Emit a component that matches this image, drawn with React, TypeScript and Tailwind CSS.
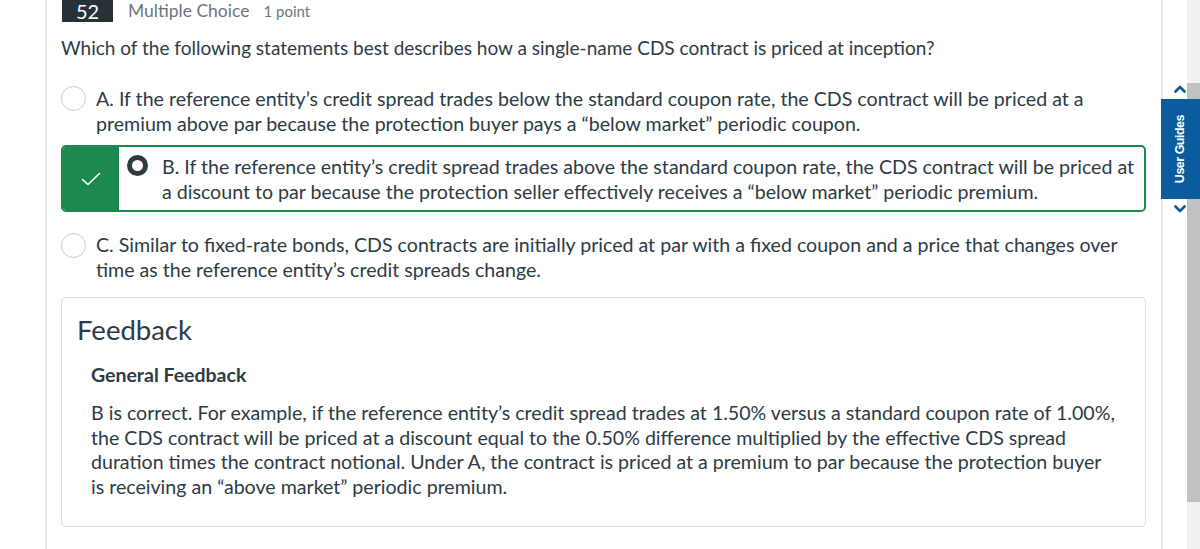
import React from "react";

function Radio() {
  return (
    <span className="block w-[25px] h-[25px] shrink-0 rounded-full border border-[#c7cdd1] bg-white" />
  );
}

export default function App() {
  return (
    <div className="relative w-[1200px] h-[549px] overflow-hidden bg-white flex font-['Lato','Noto_Sans',sans-serif] text-[#2d3b45]">
      <div className="w-[45px] shrink-0" />
      <div className="w-[2px] shrink-0 bg-[#e8e8e8]" />
      <main className="w-[1114px] shrink-0 pl-[14px] pr-[15px]">
        {/* header */}
        <div className="flex items-center h-[22px]">
          <div className="w-[51px] h-[22px] ml-[1px] bg-[#263238] text-white text-[20px] leading-[22px] text-center">
            52
          </div>
          <span className="ml-[15px] text-[17.5px] leading-[22px] text-[#6b7780]">Multiple Choice</span>
          <span className="ml-[14px] text-[15px] leading-[22px] text-[#6b7780]">1 point</span>
        </div>

        {/* question */}
        <p className="mt-[14px] text-[19px] leading-[24px]">
          Which of the following statements best describes how a single-name CDS contract is priced at inception?
        </p>

        {/* option A */}
        <div className="mt-[27px] flex items-start">
          <div className="-mt-[1px]">
            <Radio />
          </div>
          <p className="ml-[10px] text-[19.6px] leading-[24.5px] whitespace-nowrap">
            A. If the reference entity’s credit spread trades below the standard coupon rate, the CDS contract will be priced at a
            <br />
            premium above par because the protection buyer pays a “below market” periodic coupon.
          </p>
        </div>

        {/* option B */}
        <div className="mt-[9px] flex h-[67px] border-2 border-[#1c8a4e] rounded-[5px] overflow-hidden">
          <div className="w-[56px] shrink-0 bg-[#1c8a4e] flex items-center justify-center">
            <svg width="20" height="14" viewBox="0 0 20 14" fill="none">
              <path d="M1.5 7.5 L7 12.5 L18.5 1.5" stroke="white" strokeWidth="1.6" strokeLinecap="round" strokeLinejoin="round" />
            </svg>
          </div>
          <div className="flex items-start pl-[8px] pt-[8px]">
            <span className="block w-[21px] h-[21px] shrink-0 rounded-full border-[5px] border-[#2d3b45] bg-white" />
            <p className="ml-[14px] text-[19.6px] leading-[24.5px] whitespace-nowrap">
              B. If the reference entity’s credit spread trades above the standard coupon rate, the CDS contract will be priced at
              <br />
              a discount to par because the protection seller effectively receives a “below market” periodic premium.
            </p>
          </div>
        </div>

        {/* option C */}
        <div className="mt-[21px] flex items-start">
          <Radio />
          <p className="ml-[10px] text-[19.6px] leading-[24.5px] whitespace-nowrap">
            C. Similar to fixed-rate bonds, CDS contracts are initially priced at par with a fixed coupon and a price that changes over
            <br />
            time as the reference entity’s credit spreads change.
          </p>
        </div>

        {/* feedback */}
        <div className="mt-[15px] h-[230px] border border-[#dcdcdc] rounded-[5px] pl-[15px] pt-[16px]">
          <h2 className="text-[27.5px] leading-[32px] font-normal">Feedback</h2>
          <div className="pl-[14px]">
            <h3 className="mt-[16px] text-[19.5px] leading-[26px] font-bold">General Feedback</h3>
            <p className="mt-[13px] text-[19.6px] leading-[24.5px] whitespace-nowrap">
              B is correct. For example, if the reference entity’s credit spread trades at 1.50% versus a standard coupon rate of 1.00%,
              <br />
              the CDS contract will be priced at a discount equal to the 0.50% difference multiplied by the effective CDS spread
              <br />
              duration times the contract notional. Under A, the contract is priced at a premium to par because the protection buyer
              <br />
              is receiving an “above market” periodic premium.
            </p>
          </div>
        </div>
      </main>
      <div className="w-[2px] shrink-0 bg-[#e8e8e8]" />
      <div className="w-[24px] shrink-0" />
      <div className="w-[13px] shrink-0 bg-[#f1f1f1]">
        <div className="mt-[83px] h-[419px] bg-[#c1c1c1]" />
      </div>

      {/* User Guides tab */}
      <div className="absolute left-[1174px] top-[85px]">
        <svg width="12" height="8" viewBox="0 0 12 8" fill="none">
          <path d="M1.5 6.5 L6 2 L10.5 6.5" stroke="#0b5a9c" strokeWidth="2.6" strokeLinecap="round" strokeLinejoin="round" />
        </svg>
      </div>
      <div className="absolute left-[1161px] top-[99px] w-[39px] h-[100px] bg-[#0b5c9e] flex items-center justify-center">
        <span className="[writing-mode:vertical-rl] rotate-180 text-white font-bold text-[12.5px] tracking-[-0.5px] font-['Liberation_Sans',Arial,sans-serif]">
          User Guides
        </span>
      </div>
      <div className="absolute left-[1174px] top-[205px]">
        <svg width="12" height="8" viewBox="0 0 12 8" fill="none">
          <path d="M1.5 1.5 L6 6 L10.5 1.5" stroke="#0b5a9c" strokeWidth="2.6" strokeLinecap="round" strokeLinejoin="round" />
        </svg>
      </div>
    </div>
  );
}
